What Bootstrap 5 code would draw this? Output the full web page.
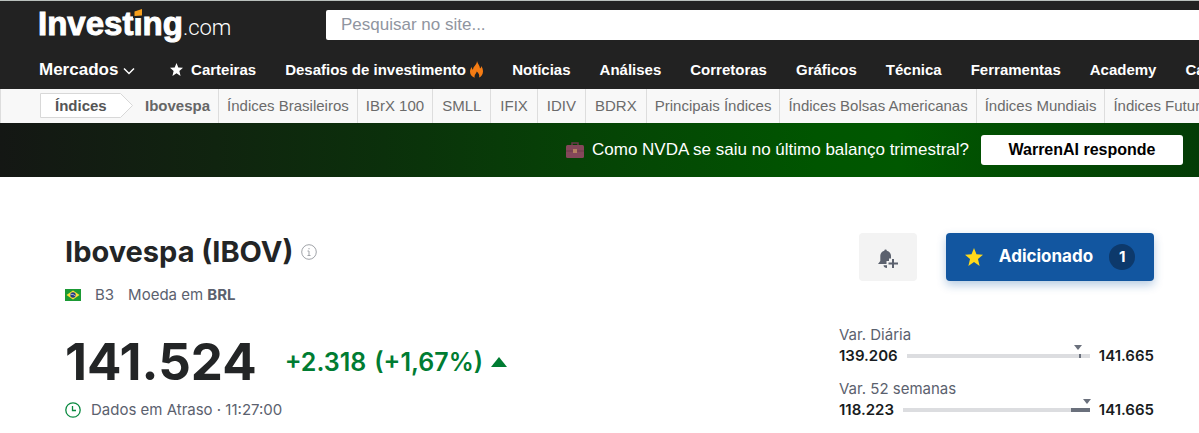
<!DOCTYPE html>
<html lang="pt-BR">
<head>
<meta charset="utf-8">
<meta name="viewport" content="width=device-width, initial-scale=1">
<title>Ibovespa (IBOV) - Investing.com</title>
<link rel="stylesheet" href="https://cdn.jsdelivr.net/npm/bootstrap@5.3.0/dist/css/bootstrap.min.css">
<style>
  body { font-family: "Liberation Sans", Arial, sans-serif; color: #232526; background: #fff; overflow-x: hidden; }
  a { text-decoration: none; color: inherit; }
  .site-head { background: #222; border-top: 1px solid #b9c0bc; color: #fff; height: 89px; overflow: hidden; }
  .top-bar { padding: 9px 0 0 38px; height: 49px; }
  .brand { width: 288px; line-height: 28px; white-space: nowrap; color: #fff; }
  .brand-name { font-size: 33px; font-weight: 700; -webkit-text-stroke: 1px #fff; }
  .brand-tld { font-family: Roboto, sans-serif; font-size: 22px; font-weight: 300; }
  .brand-i { position: relative; }
  .brand-i svg { position: absolute; left: 0; top: 3px; }
  .search-box { height: 30px; border: 0; border-radius: 2px 0 0 2px; font-size: 17px; padding: 0 15px; color: #333; }
  .search-box::placeholder { color: #9095a0; opacity: 1; }
  .main-nav { gap: 29px; padding-left: 39px; font-size: 15px; font-weight: 700; line-height: 40px; white-space: nowrap; }
  .main-nav .markets { font-size: 17px; margin-right: 6px; }
  .nav-star { vertical-align: -1px; }
  .flame { vertical-align: -3px; }
  .sub-nav { background: #f8f8f8; border-left: 1px solid #ddd; height: 34px; padding: 0 0 0 39px; font-size: 15px; line-height: 34px; color: #6b6b6b; white-space: nowrap; overflow: hidden; }
  .sub-nav a { flex: none; padding: 0 8px; border-right: 1px solid #ddd; }
  .sub-nav .ticker { padding: 0 9px; }
  .sub-nav .crumb { position: relative; border: 0; padding: 0; width: 95px; font-weight: 700; color: #555; }
  .crumb svg { display: block; margin-top: 4px; }
  .crumb span { position: absolute; left: 15px; top: 0; }
  .sub-nav .here { font-weight: 700; padding-left: 10px; color: #666; }
  .promo { height: 54px; padding-right: 16px; background: linear-gradient(90deg, #141714 0, #10240f 18%, #0b300b 32%, #064206 48%, #005500 68%, #005800 75%, #043c06 100%); color: #fff; font-size: 17px; }
  .promo .btn { width: 202px; height: 30px; padding: 0; font-size: 16px; font-weight: 700; color: #000; background: #fff; border-radius: 3px; margin-left: 12px; }
  .quote { font-family: Inter, sans-serif; padding: 56px 45px 0 65px; }
  .quote h1 { font-size: 29px; line-height: 38px; font-weight: 700; }
  .meta { font-size: 15px; line-height: 24px; color: #5b616e; }
  .exchange { gap: 14px; margin-top: 12px; }
  .bell-btn { width: 58px; height: 48px; background: #f3f3f3; border-radius: 4px; padding: 0; }
  .actions { gap: 29px; }
  .added-btn { width: 208px; height: 48px; background: #1256a0; color: #fff; border-radius: 4px; font-size: 17px; font-weight: 700; padding: 0; box-shadow: 0 4px 10px #1256a04d; }
  .added-btn:hover { background: #1256a0; color: #fff; }
  .tally { width: 26px; height: 26px; line-height: 25px; background: #0d396b; font-size: 15px; }
  .figures { margin-top: 1px; }
  .last { gap: 28px; }
  .price { font-size: 51px; line-height: 60px; font-weight: 700; }
  .change { gap: 8px; font-size: 25px; line-height: 32px; font-weight: 600; color: #007c32; }
  .delayed { gap: 10px; margin-top: 6px; }
  .ranges { width: 315px; font-size: 15px; line-height: 21px; }
  .range-row { gap: 9px; }
  .range-label { color: #5b616e; }
  .range-val { font-weight: 600; color: #181c21; }
  .track { position: relative; height: 4px; background: #dcdde0; }
  .track-fill { position: absolute; top: 0; height: 4px; background: #6a707c; }
  .track-mark { position: absolute; top: -9px; margin-left: -5px; border: 4px solid transparent; border-top: 5px solid #6a707c; border-bottom: 0; }
</style>
</head>
<body>
<header class="site-head">
  <div class="top-bar d-flex">
    <a class="brand" href="#"><span class="brand-name">Invest<span class="brand-i">i<svg width="10" height="10" viewBox="0 0 10 10"><path fill="#222" d="M0 0h9.500v10H0z"/><path fill="#f7a01d" d="M1.500 3.500 9 1v6.500l-7.500.5z"/></svg></span>ng</span><span class="brand-tld">.com</span></a>
    <input class="search-box flex-grow-1" type="text" placeholder="Pesquisar no site..." aria-label="Pesquisar no site">
  </div>
  <nav class="main-nav d-flex">
    <a class="markets" href="#">Mercados <svg width="12" height="8" viewBox="0 0 12 8"><path d="M1 1.500 6 6.500 11 1.500" fill="none" stroke="#fff" stroke-width="1.500"/></svg></a>
    <a href="#"><svg class="nav-star me-2" width="13" height="13" viewBox="0 0 24 24"><path fill="#fff" d="m12 0 3.300 8.300 8.700.6-6.700 5.700L19.500 24 12 18.800 4.500 24l2.200-9.400L0 8.900l8.700-.6z"/></svg>Carteiras</a>
    <a href="#">Desafios de investimento <svg class="flame" width="13" height="17" viewBox="0 0 13 17"><path fill="#f57c14" d="M7 0c.6 3 3 4.500 3 7.500 1-.5 1.200-1.500 1.200-2.500C12.400 6.500 13 8.500 13 10.500c0 3-1.700 5.200-4 6 .8-2.500-.3-4.500-2.300-6C6.500 12.500 4 13.500 4.700 16.700 2 16 0 13.800 0 10.800 0 8.500 1 7 1.800 6c0 1.200.3 2 1.200 2.700C3 5 7 4 7 0z"/></svg></a>
    <a href="#">Notícias</a>
    <a href="#">Análises</a>
    <a href="#">Corretoras</a>
    <a href="#">Gráficos</a>
    <a href="#">Técnica</a>
    <a href="#">Ferramentas</a>
    <a href="#">Academy</a>
    <a href="#">Calendários</a>
  </nav>
</header>
<nav class="sub-nav d-flex">
  <a class="crumb" href="#"><svg width="94" height="26" viewBox="0 0 94 26"><path d="M.500.500h80l12 12-12 12H.500z" fill="#fff" stroke="#d8d8d8"/></svg><span>Índices</span></a>
  <a class="here" href="#">Ibovespa</a>
  <a href="#">Índices Brasileiros</a>
  <a href="#">IBrX 100</a>
  <a class="ticker" href="#">SMLL</a>
  <a class="ticker" href="#">IFIX</a>
  <a class="ticker" href="#">IDIV</a>
  <a class="ticker" href="#">BDRX</a>
  <a href="#">Principais Índices</a>
  <a href="#">Índices Bolsas Americanas</a>
  <a href="#">Índices Mundiais</a>
  <a href="#">Índices Futuros</a>
</nav>
<section class="promo d-flex align-items-center justify-content-end">
  <svg class="me-2" width="18" height="16" viewBox="0 0 18 16"><path d="M6 4V1h6v3" fill="none" stroke="#6b3a49" stroke-width="1.500"/><rect y="3" width="18" height="13" rx="1.500" fill="#84475a"/><path d="M0 9h18" stroke="#6b3a49"/><rect x="7" y="7" width="4" height="4" fill="#b58060"/></svg>
  <span>Como NVDA se saiu no último balanço trimestral?</span>
  <button class="btn" type="button">WarrenAI responde</button>
</section>
<main class="quote">
  <div class="d-flex justify-content-between">
    <div>
      <div class="d-flex align-items-center">
        <h1 class="m-0">Ibovespa (IBOV)</h1>
        <svg class="ms-2" width="16" height="16" viewBox="0 0 16 16" fill="none" stroke="#a0a3a8"><circle cx="8" cy="8" r="7.300"/><path d="M6.500 7H8v4.500M6.500 11.500h3M8 4v1.300"/></svg>
      </div>
      <div class="meta exchange d-flex align-items-center">
        <svg width="16" height="12" viewBox="0 0 16 12"><path fill="#1b9a35" d="M0 0h16v12H0z"/><path fill="#fce038" d="m8 1.500 6.500 4.500L8 10.500 1.500 6z"/><circle cx="8" cy="6" r="2.700" fill="#223c86"/><path d="M5.500 5.300q3-.3 5 1.700" fill="none" stroke="#fff" stroke-width=".6"/></svg>
        <span>B3</span><span>Moeda em <strong>BRL</strong></span>
      </div>
    </div>
    <div class="actions d-flex">
      <button class="btn bell-btn" type="button" aria-label="Criar alerta"><svg width="20" height="20" viewBox="0 0 20 20"><path fill="#5b616e" d="M7.500.500a1.200 1.200 0 0 1 1.300 1.200C11.600 2.300 13 4.500 13 7v2.500h-2V12H8.500v3H0l2.300-3V7c0-2.500 1.300-4.700 4-5.300A1.200 1.200 0 0 1 7.500.500zM5.500 16.200H9V19c-2 0-3.300-1-3.500-2.800z"/><path d="M15 10v9M10.500 14.500h9.500" stroke="#5b616e" stroke-width="2"/></svg></button>
      <button class="btn added-btn d-flex align-items-center justify-content-center" type="button"><svg width="18" height="18" viewBox="0 0 24 24"><path fill="#ffd91a" d="m12 0 3.300 8.300 8.700.6-6.700 5.700L19.500 24 12 18.800 4.500 24l2.200-9.400L0 8.900l8.700-.6z"/></svg><span class="mx-3">Adicionado</span><span class="tally rounded-circle">1</span></button>
    </div>
  </div>
  <div class="figures d-flex justify-content-between">
    <div class="pt-4">
      <div class="last d-flex align-items-center">
        <span class="price">141.524</span>
        <span class="change d-flex align-items-center"><span>+2.318</span><span>(+1,67%)</span>
        <svg width="16" height="10" viewBox="0 0 16 10"><path fill="#007c32" d="M8 0l8 10H0z"/></svg></span>
      </div>
      <div class="meta delayed d-flex align-items-center">
        <svg width="16" height="16" viewBox="0 0 16 16" fill="none" stroke="#0a8a40" stroke-width="1.300"><circle cx="8" cy="8" r="7.200"/><path d="M7.500 4v4.500H11"/></svg>
        <span>Dados em Atraso · 11:27:00</span>
      </div>
    </div>
    <div class="ranges pt-3">
      <div class="range-label">Var. Diária</div>
      <div class="range-row d-flex align-items-center">
        <span class="range-val">139.206</span>
        <div class="track flex-grow-1"><div class="track-fill" style="left:94%;width:1%"></div><div class="track-mark" style="left:94%"></div></div>
        <span class="range-val">141.665</span>
      </div>
      <div class="range-label mt-2 pt-1">Var. 52 semanas</div>
      <div class="range-row d-flex align-items-center">
        <span class="range-val">118.223</span>
        <div class="track flex-grow-1"><div class="track-fill" style="left:90%;width:10%"></div><div class="track-mark" style="left:99%"></div></div>
        <span class="range-val">141.665</span>
      </div>
    </div>
  </div>
</main>
<script src="https://cdn.jsdelivr.net/npm/bootstrap@5.3.0/dist/js/bootstrap.bundle.min.js"></script>
</body>
</html>
